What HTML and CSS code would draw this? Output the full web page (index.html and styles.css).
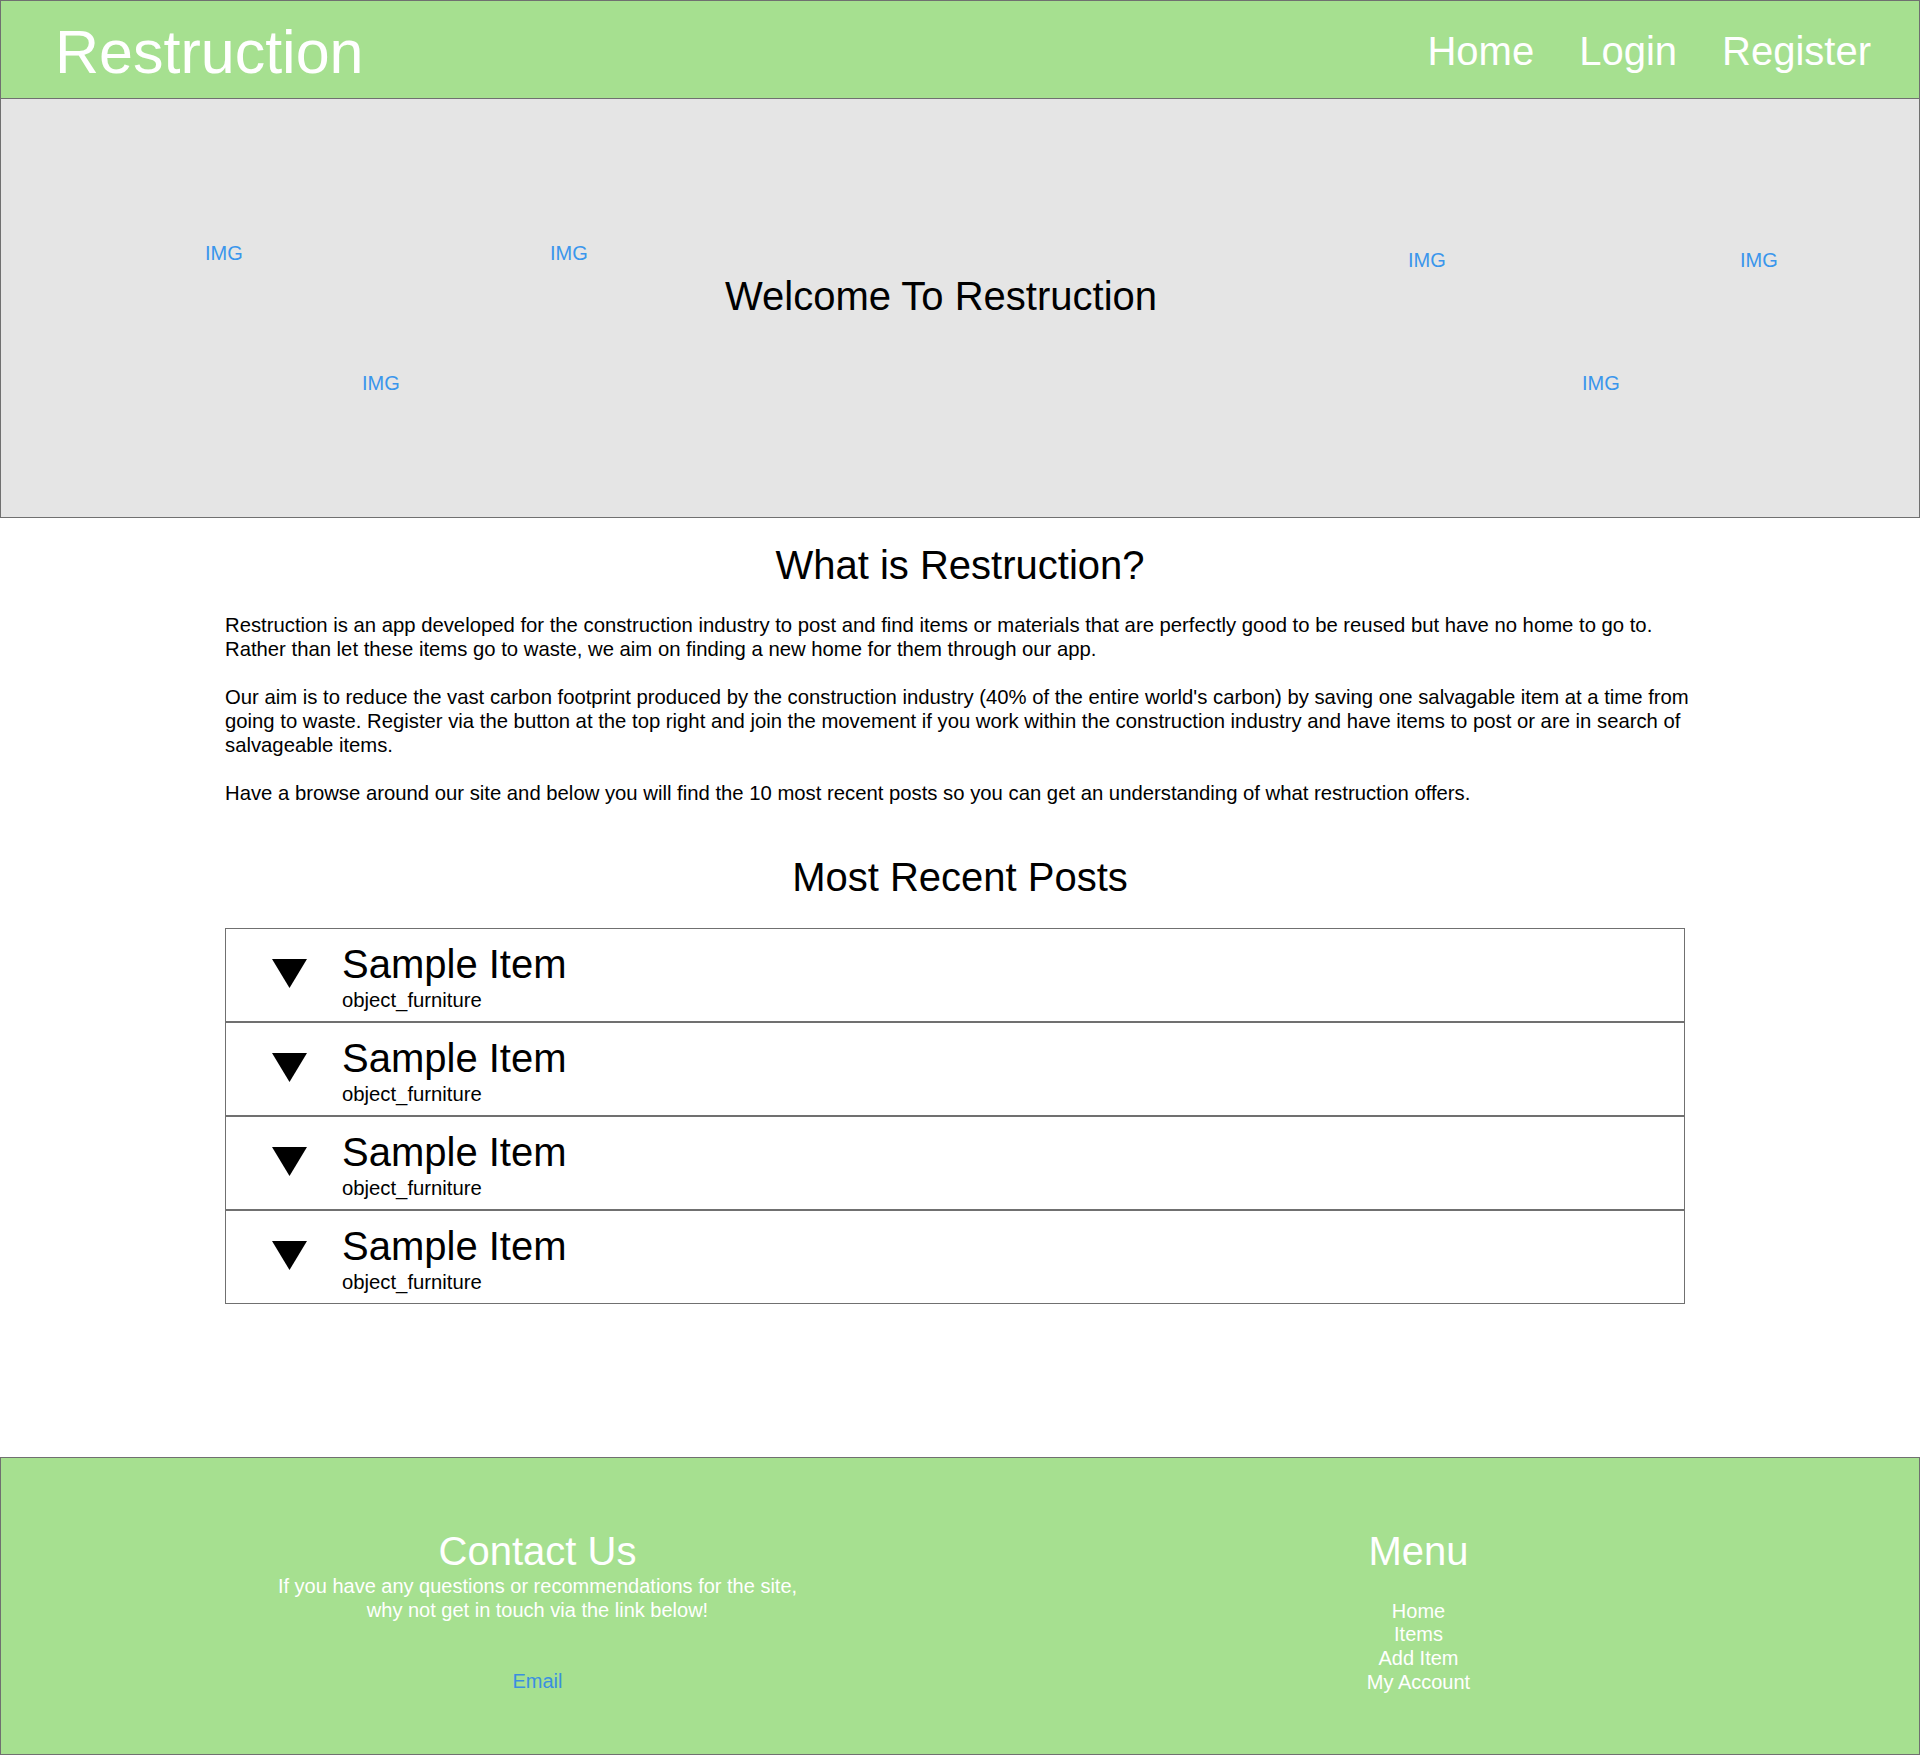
FILE: index.html
```html
<!DOCTYPE html>
<html lang="en">
<head>
<meta charset="utf-8">
<title>Restruction</title>
<link rel="stylesheet" href="styles.css">
</head>
<body>
<header class="topbar">
  <div class="logo">Restruction</div>
  <nav class="nav">
    <a href="#">Home</a>
    <a href="#">Login</a>
    <a href="#">Register</a>
  </nav>
</header>

<section class="hero">
  <span class="img-ph ph1">IMG</span>
  <span class="img-ph ph2">IMG</span>
  <span class="img-ph ph3">IMG</span>
  <span class="img-ph ph4">IMG</span>
  <span class="img-ph ph5">IMG</span>
  <span class="img-ph ph6">IMG</span>
  <h1 class="hero-title">Welcome To Restruction</h1>
</section>

<main class="content">
  <h2 class="section-title">What is Restruction?</h2>
  <div class="about">
    <p>Restruction is an app developed for the construction industry to post and find items or materials that are perfectly good to be reused but have no home to go to.<br>Rather than let these items go to waste, we aim on finding a new home for them through our app.</p>
    <p>Our aim is to reduce the vast carbon footprint produced by the construction industry (40% of the entire world's carbon) by saving one salvagable item at a time from<br>going to waste. Register via the button at the top right and join the movement if you work within the construction industry and have items to post or are in search of<br>salvageable items.</p>
    <p>Have a browse around our site and below you will find the 10 most recent posts so you can get an understanding of what restruction offers.</p>
  </div>

  <h2 class="section-title recent">Most Recent Posts</h2>
  <ul class="posts">
    <li class="post">
      <svg class="arrow" width="35" height="29" viewBox="0 0 35 29"><polygon points="0,0 35,0 17.5,29" fill="#000"/></svg>
      <div class="post-text"><div class="post-title">Sample Item</div><div class="post-cat">object_furniture</div></div>
    </li>
    <li class="post">
      <svg class="arrow" width="35" height="29" viewBox="0 0 35 29"><polygon points="0,0 35,0 17.5,29" fill="#000"/></svg>
      <div class="post-text"><div class="post-title">Sample Item</div><div class="post-cat">object_furniture</div></div>
    </li>
    <li class="post">
      <svg class="arrow" width="35" height="29" viewBox="0 0 35 29"><polygon points="0,0 35,0 17.5,29" fill="#000"/></svg>
      <div class="post-text"><div class="post-title">Sample Item</div><div class="post-cat">object_furniture</div></div>
    </li>
    <li class="post">
      <svg class="arrow" width="35" height="29" viewBox="0 0 35 29"><polygon points="0,0 35,0 17.5,29" fill="#000"/></svg>
      <div class="post-text"><div class="post-title">Sample Item</div><div class="post-cat">object_furniture</div></div>
    </li>
  </ul>
</main>

<footer class="footer">
  <div class="footer-col contact">
    <h3 class="footer-title">Contact Us</h3>
    <p class="contact-text">If you have any questions or recommendations for the site,<br>why not get in touch via the link below!</p>
    <a class="email" href="#">Email</a>
  </div>
  <div class="footer-col menu">
    <h3 class="footer-title">Menu</h3>
    <ul class="menu-list">
      <li><a href="#">Home</a></li>
      <li><a href="#">Items</a></li>
      <li><a href="#">Add Item</a></li>
      <li><a href="#">My Account</a></li>
    </ul>
  </div>
</footer>
</body>
</html>
```

FILE: styles.css
```css
* { box-sizing: border-box; }

body {
  margin: 0;
  font-family: "Liberation Sans", Arial, Helvetica, sans-serif;
  color: #000;
  background: #fff;
}

/* Header */
.topbar {
  display: flex;
  justify-content: space-between;
  align-items: flex-start;
  height: 99px;
  background: #a6e090;
  border: 1px solid #707070;
  padding: 0 48px 0 54px;
}
.logo {
  font-size: 61px;
  line-height: 60px;
  color: #fff;
  margin-top: 21px;
}
.nav {
  display: flex;
  gap: 45px;
  margin-top: 30px;
}
.nav a {
  font-size: 40px;
  line-height: 40px;
  color: #fff;
  text-decoration: none;
}

/* Hero */
.hero {
  position: relative;
  height: 419px;
  background: #e5e5e5;
  border: 1px solid #707070;
  border-top: none;
  padding-top: 174px;
}
.hero-title {
  margin: 0;
  font-size: 40px;
  line-height: 46px;
  font-weight: normal;
  text-align: center;
  padding-right: 38px;
}
.img-ph {
  position: absolute;
  font-size: 20px;
  line-height: 20px;
  color: #3a96ec;
}
.ph1 { left: 204px; top: 144px; }
.ph2 { left: 549px; top: 144px; }
.ph3 { left: 361px; top: 274px; }
.ph4 { left: 1407px; top: 151px; }
.ph5 { left: 1739px; top: 151px; }
.ph6 { left: 1581px; top: 274px; }

/* Content */
.content {
  padding-top: 24px;
  margin-bottom: 153px;
}
.section-title {
  margin: 0;
  font-size: 40px;
  line-height: 46px;
  font-weight: normal;
  text-align: center;
}
.about {
  margin: 25px 235px 0 225px;
}
.about p {
  margin: 0 0 24px;
  font-size: 20.3px;
  line-height: 24px;
  white-space: nowrap;
}
.about p:last-child { margin-bottom: 0; }

.recent { margin-top: 49px; }

.posts {
  list-style: none;
  margin: 28px 235px 0 225px;
  padding: 0;
}
.post {
  display: flex;
  align-items: flex-start;
  height: 94px;
  border: 1px solid #707070;
  padding: 15px 0 0 46px;
}
.arrow {
  display: block;
  margin-top: 15px;
  margin-right: 35px;
  flex: none;
}
.post-title {
  font-size: 40px;
  line-height: 40px;
}
.post-cat {
  font-size: 20.3px;
  line-height: 24px;
  margin-top: 4px;
}

/* Footer */
.footer {
  display: flex;
  align-items: flex-start;
  height: 298px;
  background: #a6e090;
  border: 1px solid #707070;
  padding: 71px 0 0 96px;
  color: #fff;
}
.footer-col {
  width: 881px;
  text-align: center;
}
.footer-title {
  margin: 0;
  font-size: 40px;
  line-height: 44px;
  font-weight: normal;
}
.contact-text {
  margin: 2px 0 0;
  font-size: 20px;
  line-height: 23.5px;
}
.email {
  display: block;
  margin-top: 48px;
  font-size: 20px;
  line-height: 23.5px;
  color: #3a8fe0;
  text-decoration: none;
}
.menu-list {
  list-style: none;
  margin: 26.5px 0 0;
  padding: 0;
}
.menu-list li {
  font-size: 20px;
  line-height: 23.7px;
}
.menu-list a {
  color: #fff;
  text-decoration: none;
}
```
